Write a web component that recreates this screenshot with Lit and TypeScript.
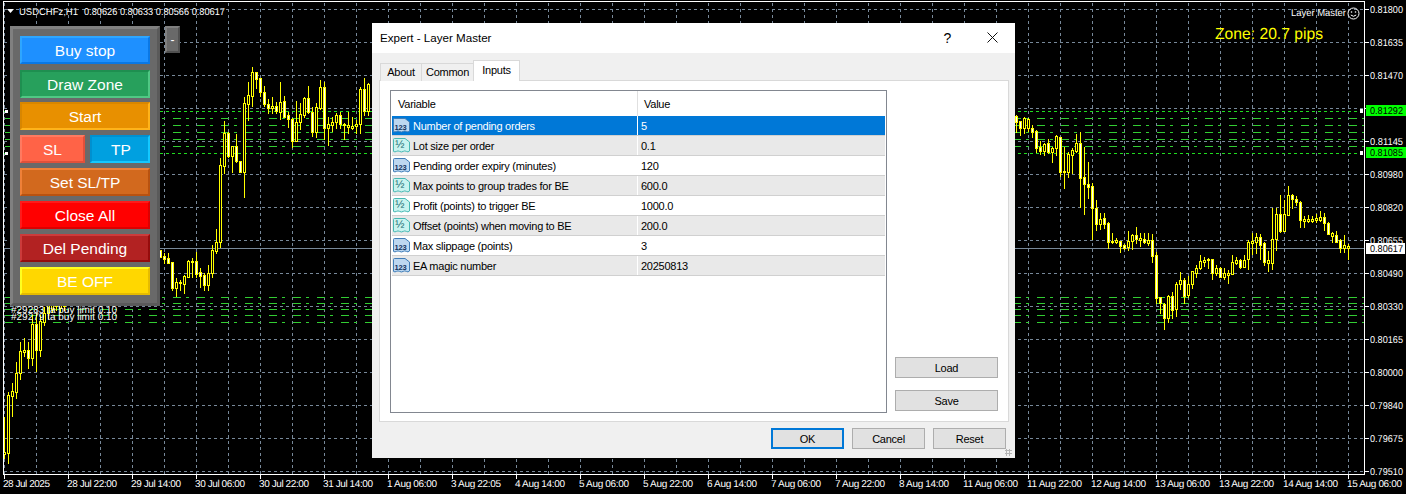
import { LitElement, html, css, svg } from 'lit';
import { customElement } from 'lit/decorators.js';

// [high, top, bottom, low, bear]
type Candle = [number, number, number, number, number];

const LEFT: Candle[] = [
  [417, 452, 454, 458, 0], [392, 395, 453, 463, 0], [383, 391, 396, 416, 0], [362, 373, 392, 398, 0],
  [342, 351, 373, 379, 0], [338, 350, 352, 356, 0], [342, 350, 358, 368, 1], [315, 324, 358, 365, 0],
  [313, 324, 350, 371, 1], [315, 321, 350, 356, 0], [307, 313, 322, 325, 0], [300, 300, 313, 318, 0],
  [300, 300, 309, 312, 0], [300, 300, 306, 310, 1], [300, 300, 308, 312, 0], [300, 300, 306, 310, 0],
];

const MIDDLE: Candle[] = [
  [250, 250, 257, 257, 1], [253, 256, 259, 263, 1], [253, 258, 263, 263, 1], [262, 262, 288, 290, 1],
  [278, 282, 288, 296, 0], [280, 282, 283, 290, 0], [275, 276, 284, 293, 0], [260, 261, 277, 277, 0],
  [258, 261, 262, 277, 0], [252, 261, 274, 277, 1], [268, 272, 276, 287, 1], [273, 275, 285, 290, 1],
  [265, 273, 285, 290, 0], [245, 250, 273, 277, 0], [229, 242, 251, 253, 0], [158, 165, 242, 247, 0],
  [121, 133, 166, 173, 0], [132, 133, 156, 157, 1], [146, 146, 156, 172, 0], [134, 146, 161, 162, 1],
  [161, 161, 172, 172, 1], [97, 103, 172, 197, 0], [82, 95, 104, 120, 0], [67, 72, 96, 106, 0],
  [72, 72, 79, 88, 1], [78, 78, 92, 96, 1], [86, 92, 104, 106, 1], [99, 104, 108, 113, 1],
  [97, 106, 108, 113, 0], [102, 106, 111, 113, 1], [82, 102, 112, 119, 0], [96, 101, 117, 117, 1],
  [112, 115, 119, 127, 1], [118, 119, 141, 147, 1], [101, 122, 141, 141, 0], [103, 114, 122, 129, 0],
  [97, 98, 115, 117, 0], [86, 98, 112, 113, 1], [107, 112, 132, 136, 1], [103, 107, 132, 137, 0],
  [80, 87, 108, 109, 0], [82, 87, 128, 139, 1], [117, 124, 128, 145, 0], [117, 122, 125, 131, 0],
  [113, 115, 122, 128, 0], [112, 115, 124, 128, 1], [123, 124, 125, 139, 0], [112, 125, 127, 133, 0],
  [117, 126, 128, 129, 0], [120, 124, 126, 133, 0], [87, 89, 124, 133, 0], [78, 89, 111, 115, 1],
  [83, 84, 111, 115, 0],
];

const RIGHT: Candle[] = [
  [115, 116, 122, 132, 1], [121, 121, 128, 135, 1], [117, 118, 128, 133, 0], [118, 119, 128, 131, 0],
  [125, 128, 132, 137, 1], [130, 131, 148, 152, 1], [141, 147, 151, 154, 1], [143, 144, 151, 155, 0],
  [139, 143, 152, 153, 1], [147, 148, 152, 162, 0], [135, 136, 148, 155, 0], [137, 137, 172, 176, 1],
  [147, 171, 172, 188, 0], [152, 154, 172, 177, 0], [148, 150, 155, 173, 0], [134, 143, 151, 152, 0],
  [132, 143, 178, 207, 1], [147, 177, 184, 214, 1], [162, 184, 187, 198, 1], [183, 186, 208, 239, 1],
  [200, 208, 224, 230, 1], [213, 219, 224, 229, 0], [213, 218, 224, 228, 1], [222, 223, 242, 248, 1],
  [233, 241, 242, 243, 0], [238, 240, 242, 243, 0], [241, 241, 246, 252, 1], [244, 245, 248, 249, 1],
  [231, 241, 247, 250, 0], [234, 235, 241, 249, 0], [227, 235, 239, 243, 1], [233, 238, 240, 246, 0],
  [233, 239, 242, 243, 1], [233, 240, 243, 245, 0], [234, 240, 256, 262, 1], [252, 255, 298, 303, 1],
  [297, 297, 303, 313, 1], [303, 304, 318, 329, 1], [295, 296, 318, 322, 0], [292, 296, 310, 318, 1],
  [282, 284, 309, 316, 0], [272, 280, 284, 289, 0], [278, 280, 296, 303, 1], [276, 284, 295, 297, 0],
  [271, 271, 284, 288, 0], [265, 268, 273, 277, 0], [255, 261, 268, 269, 0], [257, 260, 262, 266, 0],
  [258, 259, 260, 268, 0], [259, 259, 273, 279, 1], [265, 268, 273, 275, 0], [267, 268, 277, 277, 1],
  [268, 273, 277, 279, 0], [270, 273, 275, 283, 0], [255, 262, 274, 274, 0], [257, 260, 263, 264, 0],
  [259, 260, 267, 268, 1], [255, 260, 267, 267, 0], [240, 242, 259, 269, 0], [233, 241, 243, 254, 0],
  [233, 237, 242, 253, 0], [234, 237, 245, 259, 1], [242, 243, 262, 265, 1], [251, 260, 263, 271, 0],
  [208, 239, 263, 269, 0], [208, 214, 239, 250, 0], [195, 214, 231, 232, 1], [200, 214, 231, 231, 0],
  [186, 195, 215, 215, 0], [194, 195, 199, 208, 1], [196, 199, 202, 205, 1], [201, 202, 220, 227, 1],
  [216, 219, 221, 227, 0], [215, 219, 221, 222, 0], [216, 219, 221, 222, 0], [214, 218, 220, 222, 0],
  [211, 217, 220, 221, 0], [213, 217, 223, 230, 1], [222, 223, 234, 234, 1], [232, 233, 236, 242, 0],
  [231, 235, 242, 242, 1], [239, 240, 248, 252, 1], [235, 245, 248, 252, 0], [244, 246, 248, 259, 0],
];

const PRICES = [
  '0.81800', '0.81635', '0.81470', '', '0.81145', '0.80980', '0.80820', '0.80655',
  '0.80490', '0.80330', '0.80165', '0.80000', '0.79840', '0.79675', '0.79510',
];

const TIMES = [
  '28 Jul 2025', '28 Jul 22:00', '29 Jul 14:00', '30 Jul 06:00', '30 Jul 22:00', '31 Jul 14:00',
  '1 Aug 06:00', '3 Aug 22:05', '4 Aug 14:00', '5 Aug 06:00', '5 Aug 22:00', '6 Aug 14:00',
  '7 Aug 06:00', '7 Aug 22:00', '8 Aug 14:00', '11 Aug 06:00', '11 Aug 22:00', '12 Aug 14:00',
  '13 Aug 06:00', '13 Aug 22:00', '14 Aug 14:00', '15 Aug 06:00',
];

const ZONE_LINES = [118, 125, 132, 139, 146, 297, 303, 309, 315, 322];

const timeWidth = (t: string) => {
  if (t === '28 Jul 2025') return 47;
  return t.length === 12 && t.includes('Aug') ? 55 : 50;
};

const candles = (list: Candle[], start: number) =>
  list.map(([high, top, bottom, low, bear], i) => {
    const x = start + i * 4;
    const inner = bottom - top - 1;
    return svg`
      <rect class="wick" x=${x} y=${high} width="1" height=${low - high + 1}></rect>
      <rect class="wick" x=${x - 1} y=${top} width="3" height=${Math.max(bottom - top + 1, 2)}></rect>
      ${inner > 0 ? svg`<rect class=${bear ? 'bear' : 'bull'} x=${x} y=${top + 1} width="1" height=${inner}></rect>` : ''}`;
  });

@customElement('chart-canvas')
export class ChartCanvas extends LitElement {
  static styles = css`
    :host { display: block; }
    svg { display: block; shape-rendering: crispEdges; }
    .grid { stroke: #778899; stroke-width: 1; stroke-dasharray: 3 3; }
    .price-line { stroke: #778899; stroke-width: 1; }
    .frame { stroke: #fff; stroke-width: 1; }
    .zone { stroke: #32cd32; stroke-width: 1; stroke-dasharray: 8 5 3 8; }
    .level { stroke: #1fdc1f; stroke-width: 1; stroke-dasharray: 3 3; }
    .wick { fill: #ffff00; }
    .bull { fill: #000; }
    .bear { fill: #fff; }
    text { font-family: 'Liberation Sans', Arial, sans-serif; font-size: 10px; fill: #fff; text-rendering: geometricPrecision; }
    .black { fill: #000; }
    .zone-text { font-size: 16px; fill: #ffff00; }
    .smile { fill: none; stroke: #fff; stroke-width: 1; shape-rendering: auto; }
  `;

  render() {
    const rows = Array.from({ length: 15 }, (_, i) => 9 + i * 33);
    const cols = Array.from({ length: 43 }, (_, i) => 4 + i * 32);
    return html`
      <svg width="1406" height="494" viewBox="0 0 1406 494">
        <rect width="1406" height="494" fill="#000"></rect>
        ${rows.map((y) => svg`<line class="grid" x1="4" x2="1364" y1=${y + 0.5} y2=${y + 0.5}></line>`)}
        ${cols.map((x) => svg`<line class="grid" x1=${x + 0.5} x2=${x + 0.5} y1="3" y2="474"></line>`)}
        <line class="price-line" x1="4" x2="1364" y1="248.5" y2="248.5"></line>
        ${ZONE_LINES.map((y) => svg`<line class="zone" x1="5" x2="1364" y1=${y + 0.5} y2=${y + 0.5}></line>`)}
        <line class="level" x1="4" x2="1364" y1="111.5" y2="111.5"></line>
        <line class="level" x1="4" x2="1364" y1="153.5" y2="153.5"></line>
        ${candles(LEFT, 4)} ${candles(MIDDLE, 160)} ${candles(RIGHT, 1016)}

        <rect x="5" y="110" width="3" height="3" fill="#fff"></rect>
        <rect x="5" y="152" width="3" height="3" fill="#fff"></rect>
        <rect x="1360" y="109" width="3" height="4" fill="#fff"></rect>
        <rect x="1360" y="151" width="3" height="4" fill="#fff"></rect>

        <line class="frame" x1="3.5" x2="3.5" y1="2" y2="475"></line>
        <line class="frame" x1="3" x2="1365" y1="1.5" y2="1.5"></line>
        <line class="frame" x1="1364.5" x2="1364.5" y1="2" y2="475"></line>
        <line class="frame" x1="3" x2="1365" y1="474.5" y2="474.5"></line>
        ${rows.map((y) => svg`<line class="frame" x1="1365" x2="1369" y1=${y + 0.5} y2=${y + 0.5}></line>`)}
        ${TIMES.map((_, i) => svg`<line class="frame" x1=${4.5 + i * 64} x2=${4.5 + i * 64} y1="475" y2="479"></line>`)}

        ${PRICES.map((p, i) => p ? svg`<text x="1370" y=${13 + i * 33} textLength="33" lengthAdjust="spacingAndGlyphs">${p}</text>` : '')}
        ${TIMES.map((t, i) => svg`<text x=${3 + i * 64} y="487" textLength=${timeWidth(t)}>${t}</text>`)}

        <rect x="1366" y="243" width="39" height="11" fill="#fff"></rect>
        <text class="black" x="1370" y="252" textLength="33" lengthAdjust="spacingAndGlyphs">0.80617</text>
        <rect x="1366" y="105" width="40" height="11" fill="#00ff00"></rect>
        <text class="black" x="1370" y="114" textLength="33" lengthAdjust="spacingAndGlyphs">0.81292</text>
        <rect x="1366" y="147" width="40" height="11" fill="#00ff00"></rect>
        <text class="black" x="1370" y="156" textLength="33" lengthAdjust="spacingAndGlyphs">0.81085</text>

        <polygon points="7,9 14,9 10.5,13" fill="#fff" style="shape-rendering:auto"></polygon>
        <text x="19" y="15" textLength="59" lengthAdjust="spacingAndGlyphs">USDCHFz,H1</text>
        <text x="84" y="15" textLength="141" lengthAdjust="spacingAndGlyphs">0.80626 0.80633 0.80566 0.80617</text>
        <text x="1291" y="16" textLength="55" lengthAdjust="spacingAndGlyphs">Layer Master</text>
        <circle class="smile" cx="1353.5" cy="13.5" r="5.5"></circle>
        <circle cx="1351.5" cy="12" r="0.8" fill="#fff" style="shape-rendering:auto"></circle>
        <circle cx="1355.5" cy="12" r="0.8" fill="#fff" style="shape-rendering:auto"></circle>
        <path class="smile" d="M1350.8 15 Q1353.5 17.6 1356.2 15"></path>
        <text class="zone-text" x="1215" y="39" textLength="108" lengthAdjust="spacingAndGlyphs">Zone: 20.7 pips</text>

        <text x="11" y="313">#29283 ta buy limit 0.10</text>
        <text x="11" y="320">#29279 ta buy limit 0.10</text>
      </svg>
    `;
  }
}

@customElement('trade-panel')
export class TradePanel extends LitElement {
  static styles = css`
    :host { display: flex; align-items: flex-start; gap: 5px; font-family: 'Liberation Sans', Arial, sans-serif; }
    * { box-sizing: border-box; }
    .box {
      width: 150px; height: 280px; background: #696969; padding: 7px;
      border: 3px solid; border-color: #808080 #5a5a5a #5a5a5a #808080;
      display: flex; flex-direction: column; gap: 5px;
    }
    .toggle {
      width: 15px; height: 27px; background: #696969; color: #fff; font-size: 12px;
      border: 2px solid; border-color: #808080 #505050 #505050 #808080;
      display: flex; align-items: center; justify-content: center;
    }
    .pair { display: flex; gap: 5px; }
    .btn {
      height: 28px; width: 130px; color: #fff; font-size: 15.5px; padding-top: 1px;
      border: 2px solid; display: flex; align-items: center; justify-content: center;
    }
    .pair .sl { width: 65px; }
    .pair .tp { width: 60px; padding-left: 2px; }
    .buy { background: #1e90ff; border-color: #2ea6ff #0a78e6 #0a78e6 #2ea6ff; }
    .draw { background: #27a05c; border-color: #1e8f50 #50c884 #50c884 #1e8f50; margin: 1px 0 -1px; }
    .start { background: #e89000; border-color: #d88600 #ffb31a #ffb31a #d88600; }
    .sl { background: #ff6347; border-color: #ff7a60 #e0503a #e0503a #ff7a60; }
    .tp { background: #00a0e0; border-color: #0090d0 #14c8ff #14c8ff #0090d0; }
    .set { background: #d2691e; border-color: #ef8038 #b85210 #b85210 #ef8038; }
    .close { background: #ff0000; border-color: #ff1a1a #dc0000 #dc0000 #ff1a1a; }
    .del { background: #b22222; border-color: #cc3b3b #960c0c #960c0c #cc3b3b; }
    .be { background: #ffd700; border-color: #ffff20 #e6bb00 #e6bb00 #ffff20; }
  `;

  render() {
    return html`
      <div class="box">
        <div class="btn buy">Buy stop</div>
        <div class="btn draw">Draw Zone</div>
        <div class="btn start">Start</div>
        <div class="pair">
          <div class="btn sl">SL</div>
          <div class="btn tp">TP</div>
        </div>
        <div class="btn set">Set SL/TP</div>
        <div class="btn close">Close All</div>
        <div class="btn del">Del Pending</div>
        <div class="btn be">BE OFF</div>
      </div>
      <div class="toggle">-</div>
    `;
  }
}

const INPUTS: [string, string, string][] = [
  ['int', 'Number of pending orders', '5'],
  ['dbl', 'Lot size per order', '0.1'],
  ['int', 'Pending order expiry (minutes)', '120'],
  ['dbl', 'Max points to group trades for BE', '600.0'],
  ['dbl', 'Profit (points) to trigger BE', '1000.0'],
  ['dbl', 'Offset (points) when moving to BE', '200.0'],
  ['int', 'Max slippage (points)', '3'],
  ['int', 'EA magic number', '20250813'],
];

const typeIcon = (kind: string) => {
  const int = kind === 'int';
  return html`
    <svg class="icon" width="17" height="15" viewBox="0 0 17 15">
      <path d="M0.5 1.5 Q0.5 0.5 1.5 0.5 H12 L16.5 4 V13 Q15 14.6 13.4 13.4 Q11.8 12.4 10.2 13.4 Q8.4 14.6 6.6 13.4 Q5 12.4 3.4 13.4 Q2 14.4 0.5 13.4 Z"
        fill=${int ? '#bdd7f0' : '#c9f3ef'} stroke=${int ? '#3f7db8' : '#45b8b4'}></path>
      ${int ? html`<rect x="1" y="1" width="14.5" height="4" fill="#5d97cf"></rect>` : ''}
      <text x=${int ? 1.6 : 2.2} y=${int ? 11.5 : 10} font-size=${int ? 7.5 : 11} font-weight=${int ? 700 : 400}
        font-family="Liberation Sans, Arial, sans-serif" fill=${int ? '#12315c' : '#176a70'}>${int ? '123' : '½'}</text>
    </svg>`;
};

@customElement('expert-dialog')
export class ExpertDialog extends LitElement {
  static styles = css`
    :host {
      display: flex; flex-direction: column; width: 643px; height: 435px; background: #f0f0f0;
      color: #000; font-family: 'Liberation Sans', Arial, sans-serif; font-size: 11px; letter-spacing: -0.25px;
    }
    * { box-sizing: border-box; }
    .title {
      height: 30px; background: #fff; display: flex; align-items: center; padding: 0 0 1px 8px;
      font-size: 11.6px; letter-spacing: 0;
    }
    .title span { flex: 1; }
    .win-btn { width: 45px; display: flex; align-items: center; justify-content: center; font-size: 14px; }
    .tabs { display: flex; align-items: flex-end; height: 21px; margin: 7px 0 -1px 8px; position: relative; }
    .tab {
      height: 18px; padding: 0 0 1px; display: flex; align-items: center; justify-content: center;
      background: #f0f0f0; border: 1px solid #d9d9d9; border-bottom: none; margin-right: -1px;
    }
    .tab.about { width: 42px; }
    .tab.common { width: 53px; }
    .tab.active { width: 47px; height: 21px; background: #fff; padding-bottom: 3px; }
    .page {
      width: 630px; height: 342px; margin-left: 7px; background: #fff; border: 1px solid #d9d9d9;
      padding: 9px 9px 8px 10px; display: flex; gap: 8px;
    }
    .table { width: 497px; border: 1px solid #828790; padding: 0 1px; }
    .row { display: grid; grid-template-columns: 245px 1fr; height: 20px; border-bottom: 1px solid #d0d0d0; }
    .row.head { height: 25px; border-bottom: none; }
    .row.alt { background: #e9e9e9; }
    .row.sel { background: #0078d7; color: #fff; }
    .cell { display: flex; align-items: center; min-width: 0; white-space: nowrap; }
    .cell.name { padding-left: 1px; gap: 3px; }
    .cell.value { border-left: 1px solid #fff; padding-left: 3px; }
    .row.head .cell.name { padding-left: 6px; }
    .row.head .cell.value { border-left-color: #e0e0e0; padding-left: 6px; }
    .icon { flex: none; display: block; }
    .side { flex: 1; display: flex; flex-direction: column; justify-content: flex-end; gap: 12px; padding: 0 1px 2px 0; }
    .btn {
      height: 21px; background: #e1e1e1; border: 1px solid #adadad;
      display: flex; align-items: center; justify-content: center;
    }
    .footer { display: flex; justify-content: flex-end; gap: 8px; padding: 6px 9px 0 0; }
    .footer .btn { width: 73px; }
    .footer .btn.primary { border: 2px solid #0078d7; }
    .grip {
      position: absolute; right: 3px; bottom: 2px; width: 7px; height: 7px;
      background-image: radial-gradient(#b4b4b4 1px, transparent 1.2px); background-size: 3px 3px;
    }
  `;

  render() {
    return html`
      <div class="title">
        <span>Expert - Layer Master</span>
        <div class="win-btn">?</div>
        <div class="win-btn">
          <svg width="11" height="11" viewBox="0 0 11 11"><path d="M0.5 0.5 L10.5 10.5 M10.5 0.5 L0.5 10.5" stroke="#111" fill="none"></path></svg>
        </div>
      </div>
      <div class="tabs">
        <div class="tab about">About</div>
        <div class="tab common">Common</div>
        <div class="tab active">Inputs</div>
      </div>
      <div class="page">
        <div class="table">
          <div class="row head"><div class="cell name">Variable</div><div class="cell value">Value</div></div>
          ${INPUTS.map(([kind, name, value], i) => html`
            <div class="row ${i === 0 ? 'sel' : i % 2 ? 'alt' : ''}">
              <div class="cell name">${typeIcon(kind)}${name}</div>
              <div class="cell value">${value}</div>
            </div>`)}
        </div>
        <div class="side">
          <div class="btn">Load</div>
          <div class="btn">Save</div>
        </div>
      </div>
      <div class="footer">
        <div class="btn primary">OK</div>
        <div class="btn">Cancel</div>
        <div class="btn">Reset</div>
      </div>
      <div class="grip"></div>
    `;
  }
}

@customElement('app-root')
export class AppRoot extends LitElement {
  static styles = css`
    :host { display: block; position: relative; width: 1406px; height: 494px; overflow: hidden; background: #000; }
    trade-panel { position: absolute; left: 10px; top: 26px; }
    expert-dialog { position: absolute; left: 372px; top: 23px; }
  `;

  render() {
    return html`
      <chart-canvas></chart-canvas>
      <trade-panel></trade-panel>
      <expert-dialog></expert-dialog>
    `;
  }
}
